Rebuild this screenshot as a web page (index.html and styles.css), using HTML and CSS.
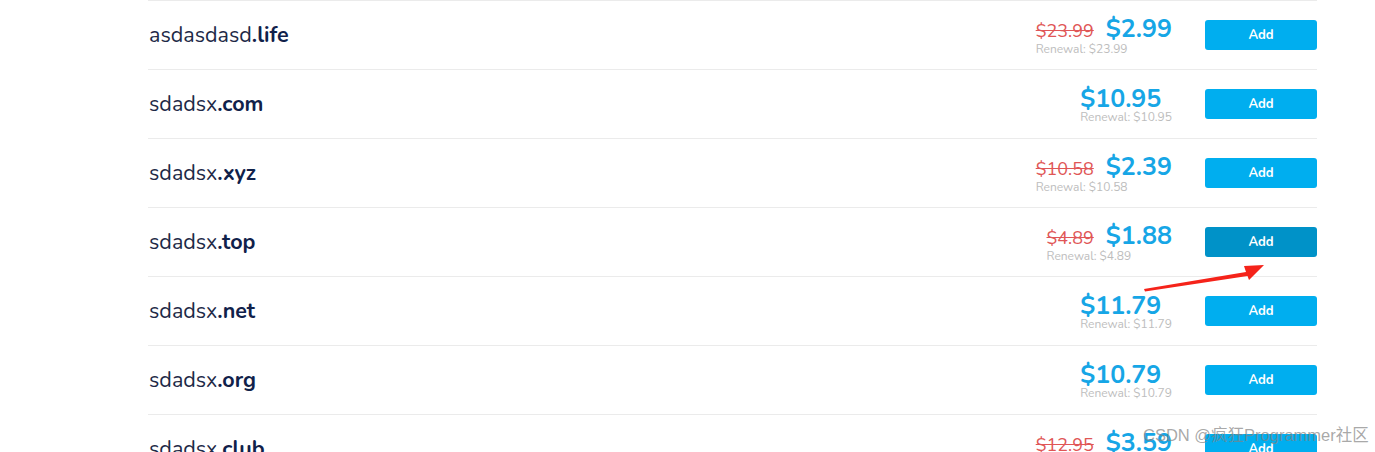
FILE: index.html
```html
<!DOCTYPE html>
<html lang="en">
<head>
    <meta charset="UTF-8">
    <title>Domain results</title>
    <link rel="stylesheet" href="styles.css">
</head>
<body>
    <div class="list">
        <div class="row">
            <div class="domain">asdasdasd<b>.life</b></div>
            <div class="price">
                <div class="line"><span class="old">$23.99</span><span class="now">$2.99</span></div>
                <div class="renew">Renewal: $23.99</div>
            </div>
            <div class="btn">Add</div>
        </div>
        <div class="row">
            <div class="domain">sdadsx<b>.com</b></div>
            <div class="price">
                <div class="line"><span class="now">$10.95</span></div>
                <div class="renew">Renewal: $10.95</div>
            </div>
            <div class="btn">Add</div>
        </div>
        <div class="row">
            <div class="domain">sdadsx<b>.xyz</b></div>
            <div class="price">
                <div class="line"><span class="old">$10.58</span><span class="now">$2.39</span></div>
                <div class="renew">Renewal: $10.58</div>
            </div>
            <div class="btn">Add</div>
        </div>
        <div class="row">
            <div class="domain">sdadsx<b>.top</b></div>
            <div class="price">
                <div class="line"><span class="old">$4.89</span><span class="now">$1.88</span></div>
                <div class="renew">Renewal: $4.89</div>
            </div>
            <div class="btn hover">Add</div>
        </div>
        <div class="row">
            <div class="domain">sdadsx<b>.net</b></div>
            <div class="price">
                <div class="line"><span class="now">$11.79</span></div>
                <div class="renew">Renewal: $11.79</div>
            </div>
            <div class="btn">Add</div>
        </div>
        <div class="row">
            <div class="domain">sdadsx<b>.org</b></div>
            <div class="price">
                <div class="line"><span class="now">$10.79</span></div>
                <div class="renew">Renewal: $10.79</div>
            </div>
            <div class="btn">Add</div>
        </div>
        <div class="row">
            <div class="domain">sdadsx<b>.club</b></div>
            <div class="price">
                <div class="line"><span class="old">$12.95</span><span class="now">$3.59</span></div>
                <div class="renew">Renewal: $12.95</div>
            </div>
            <div class="btn">Add</div>
        </div>
    </div>

    <!-- red annotation arrow over the list -->
    <svg class="arrow" width="140" height="40" viewBox="0 0 140 40">
        <path d="M1 31 L103 14 L101 8 L121 7 L106 22 L104.5 18 L2 33.5 Z" fill="#f5231a"/>
    </svg>

    <div class="mark">CSDN @疯狂Programmer社区</div>
</body>
</html>
```

FILE: styles.css
```css
body {
    margin: 0;
    background: #fff;
    font-family: "Nunito", "Lato", "Open Sans", sans-serif;
    overflow: hidden;
}

.list {
    margin-left: 148px;
    width: 1169px;
}

.row {
    display: flex;
    align-items: center;
    height: 68px;
    border-top: 1px solid #ebebeb;
}

.domain {
    flex: 1;
    padding-left: 1px;
    font-size: 21.5px;
    color: #1e2a47;
}

.domain b {
    font-weight: 700;
    color: #10214a;
}

.price {
    display: flex;
    flex-direction: column;
    align-items: flex-start;
    margin-right: 33px;
    padding-top: 2px;
}

.line {
    display: flex;
    align-items: baseline;
    gap: 12px;
    line-height: 24px;
}

.old {
    font-size: 18px;
    color: #e05656;
    text-decoration: line-through;
}

.now {
    font-size: 25px;
    font-weight: 700;
    color: #16a6e6;
}

.renew {
    font-size: 12px;
    color: #bdbdbd;
    line-height: 13px;
}

.btn {
    width: 112px;
    height: 30px;
    display: flex;
    justify-content: center;
    align-items: center;
    background: #00aeef;
    border-radius: 3px;
    color: #fff;
    font-size: 13px;
    font-weight: 700;
}

.btn.hover {
    background: #0092c8;
}

.arrow {
    position: absolute;
    left: 1143px;
    top: 258px;
}

.mark {
    position: absolute;
    left: 1143px;
    top: 422px;
    white-space: nowrap;
    font-family: "Liberation Sans", "Noto Sans CJK SC", sans-serif;
    font-size: 16.5px;
    color: rgba(130, 130, 130, 0.7);
}
```
